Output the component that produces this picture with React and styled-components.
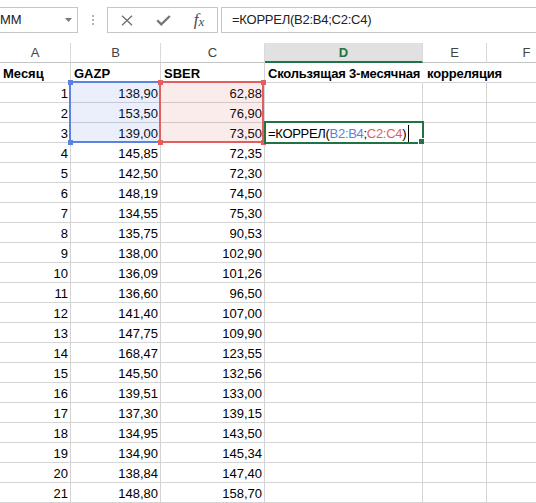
import React from "react";
import styled, { createGlobalStyle } from "styled-components";

const GlobalStyle = createGlobalStyle`
  html, body { margin: 0; padding: 0; background: #fff; overflow: hidden; }
  body { font-family: "Liberation Sans", Arial, sans-serif; }
  * { box-sizing: border-box; }
`;

const COLS = "71px 90px 104px 158px 64px 80px";
const BLUE = "#5a82de";
const RED = "#e25f5f";
const GREEN = "#217346";

const Page = styled.div`
  width: 536px;
  height: 503px;
  overflow: hidden;
  background: #fff;
  color: #000;
`;

const FormulaBar = styled.div`
  height: 43px;
  padding-top: 7px;
  display: flex;
  align-items: flex-start;
  font-size: 13px;
`;

const NameBox = styled.div`
  width: 78px;
  height: 26px;
  border: 1px solid #c6c6c6;
  border-left: none;
  display: flex;
  align-items: center;
  justify-content: space-between;
  padding-right: 5px;
  line-height: 24px;
  color: #222;
`;

const Dots = styled.div`
  width: 29px;
  height: 26px;
  display: flex;
  flex-direction: column;
  align-items: center;
  justify-content: center;
  gap: 2px;
  span {
    width: 2px;
    height: 2px;
    background: #b4b4b4;
  }
`;

const ButtonsBox = styled.div`
  width: 111px;
  height: 26px;
  border: 1px solid #c6c6c6;
  display: flex;
  align-items: center;
  padding-left: 1px;
`;

const BarButton = styled.div`
  width: 36px;
  height: 24px;
  display: flex;
  align-items: center;
  justify-content: center;
`;

const Fx = styled.span`
  font-family: "Liberation Serif", "Times New Roman", serif;
  font-style: italic;
  color: #4a4a4a;
  font-size: 17px;
  line-height: 1;
  display: flex;
  align-items: flex-end;
  margin-top: -1px;
  small { font-size: 13px; margin-left: 0px; }
`;

const FormulaInput = styled.div`
  flex: 1;
  margin-left: 3px;
  margin-right: -20px;
  height: 26px;
  border: 1px solid #c6c6c6;
  padding-left: 10px;
  line-height: 24px;
  letter-spacing: -0.25px;
  white-space: pre;
  color: #222;
`;

const HeaderRow = styled.div`
  display: grid;
  grid-template-columns: ${COLS};
  height: 20px;
`;

const ColHead = styled.div`
  height: 20px;
  border-right: 1px solid #dadada;
  border-bottom: ${(p) => (p.$active ? `2px solid ${GREEN}` : "1px solid #c4c4c4")};
  background: ${(p) => (p.$active ? "#e1e1e1" : "#fff")};
  color: ${(p) => (p.$active ? GREEN : "#444")};
  font-weight: ${(p) => (p.$active ? 700 : 400)};
  font-size: 13px;
  line-height: 19px;
  text-align: center;
`;

const Body = styled.div`
  position: relative;
`;

const Row = styled.div`
  display: grid;
  grid-template-columns: ${COLS};
  height: 20px;
`;

const Cell = styled.div`
  height: 20px;
  border-right: ${(p) => (p.$noRight ? "1px solid transparent" : "1px solid #d4d4d4")};
  border-bottom: 1px solid #d4d4d4;
  padding: 2px 2px 0 3px;
  font-size: 13px;
  line-height: 17px;
  font-weight: ${(p) => (p.$bold ? 700 : 400)};
  letter-spacing: ${(p) => (p.$tight ? "-0.2px" : "0")};
  text-align: ${(p) => (p.$right ? "right" : "left")};
  white-space: pre;
  overflow: ${(p) => (p.$spill ? "visible" : "hidden")};
  position: relative;
  z-index: ${(p) => (p.$spill ? 2 : 1)};
`;

const Ref = styled.span`
  color: ${(p) => p.$color};
`;

const Caret = styled.span`
  display: inline-block;
  width: 1px;
  height: 17px;
  background: #000;
  margin-left: 2px;
  vertical-align: -4px;
`;

const Range = styled.div`
  position: absolute;
  z-index: 3;
  border: 2px solid ${(p) => p.$color};
  background: ${(p) => p.$fill};
  pointer-events: none;
`;

const Handle = styled.div`
  position: absolute;
  width: 5px;
  height: 5px;
  background: ${(p) => p.$color};
  ${(p) => (p.$top ? "top: -3px;" : "bottom: -4px;")}
  ${(p) => (p.$left ? "left: -3px;" : "right: -4px;")}
`;

const ActiveBox = styled.div`
  position: absolute;
  z-index: 4;
  border: 2px solid ${GREEN};
  pointer-events: none;
`;

const FillHandle = styled.div`
  position: absolute;
  right: -2px;
  bottom: -2px;
  width: 6px;
  height: 6px;
  background: ${GREEN};
  border-left: 1px solid #fff;
  border-top: 1px solid #fff;
`;

const data = [
  ["138,90", "62,88"],
  ["153,50", "76,90"],
  ["139,00", "73,50"],
  ["145,85", "72,35"],
  ["142,50", "72,30"],
  ["148,19", "74,50"],
  ["134,55", "75,30"],
  ["135,75", "90,53"],
  ["138,00", "102,90"],
  ["136,09", "101,26"],
  ["136,60", "96,50"],
  ["141,40", "107,00"],
  ["147,75", "109,90"],
  ["168,47", "123,55"],
  ["145,50", "132,56"],
  ["139,51", "133,00"],
  ["137,30", "139,15"],
  ["134,95", "143,50"],
  ["134,90", "145,34"],
  ["138,84", "147,40"],
  ["148,80", "158,70"],
];

const FormulaText = styled.span`
  letter-spacing: -0.3px;
`;

const Formula = ({ caret }) => (
  <>
    <FormulaText>
      =КОРРЕЛ(<Ref $color={BLUE}>B2:B4</Ref>;<Ref $color={RED}>C2:C4</Ref>)
    </FormulaText>
    {caret && <Caret />}
  </>
);

const CloseIcon = () => (
  <svg width="12" height="11" viewBox="0 0 12 11">
    <path d="M1 0.8 L11 10.2 M11 0.8 L1 10.2" stroke="#6e6e6e" strokeWidth="1.3" fill="none" />
  </svg>
);

const CheckIcon = () => (
  <svg width="15" height="11" viewBox="0 0 15 11">
    <path d="M1.2 5.2 L5.3 9.3 L13.8 1" stroke="#767676" strokeWidth="2.3" fill="none" />
  </svg>
);

const Caret2 = () => (
  <svg width="7" height="4" viewBox="0 0 7 4">
    <path d="M0 0 H7 L3.5 4 Z" fill="#7a7a7a" />
  </svg>
);

export default function App() {
  return (
    <Page>
      <GlobalStyle />
      <FormulaBar>
        <NameBox>
          <span>ММ</span>
          <Caret2 />
        </NameBox>
        <Dots>
          <span />
          <span />
          <span />
        </Dots>
        <ButtonsBox>
          <BarButton><CloseIcon /></BarButton>
          <BarButton><CheckIcon /></BarButton>
          <BarButton>
            <Fx>f<small>x</small></Fx>
          </BarButton>
        </ButtonsBox>
        <FormulaInput>=КОРРЕЛ(B2:B4;C2:C4)</FormulaInput>
      </FormulaBar>

      <HeaderRow>
        <ColHead>A</ColHead>
        <ColHead>B</ColHead>
        <ColHead>C</ColHead>
        <ColHead $active>D</ColHead>
        <ColHead>E</ColHead>
        <ColHead>F</ColHead>
      </HeaderRow>

      <Body>
        <Row>
          <Cell $bold>Месяц</Cell>
          <Cell $bold>GAZP</Cell>
          <Cell $bold>SBER</Cell>
          <Cell $bold $spill $noRight $tight>Скользящая 3-месячная  корреляция</Cell>
          <Cell $noRight />
          <Cell />
        </Row>
        {data.map(([g, s], i) => (
          <Row key={i}>
            <Cell $right>{i + 1}</Cell>
            <Cell $right>{g}</Cell>
            <Cell $right>{s}</Cell>
            <Cell>{i === 2 ? <Formula caret /> : null}</Cell>
            <Cell />
            <Cell />
          </Row>
        ))}

        <Range $color={BLUE} $fill="rgba(90,130,222,0.13)" style={{ left: 69, top: 18, width: 92, height: 62 }}>
          <Handle $color={BLUE} $top $left />
          <Handle $color={BLUE} $left />
        </Range>
        <Range $color={RED} $fill="rgba(226,95,95,0.12)" style={{ left: 159, top: 18, width: 105, height: 62 }}>
          <Handle $color={RED} $top $left />
          <Handle $color={RED} $left />
          <Handle $color={RED} $top />
          <Handle $color={RED} />
        </Range>
        <ActiveBox style={{ left: 264, top: 58, width: 160, height: 23 }}>
          <FillHandle />
        </ActiveBox>
      </Body>
    </Page>
  );
}
